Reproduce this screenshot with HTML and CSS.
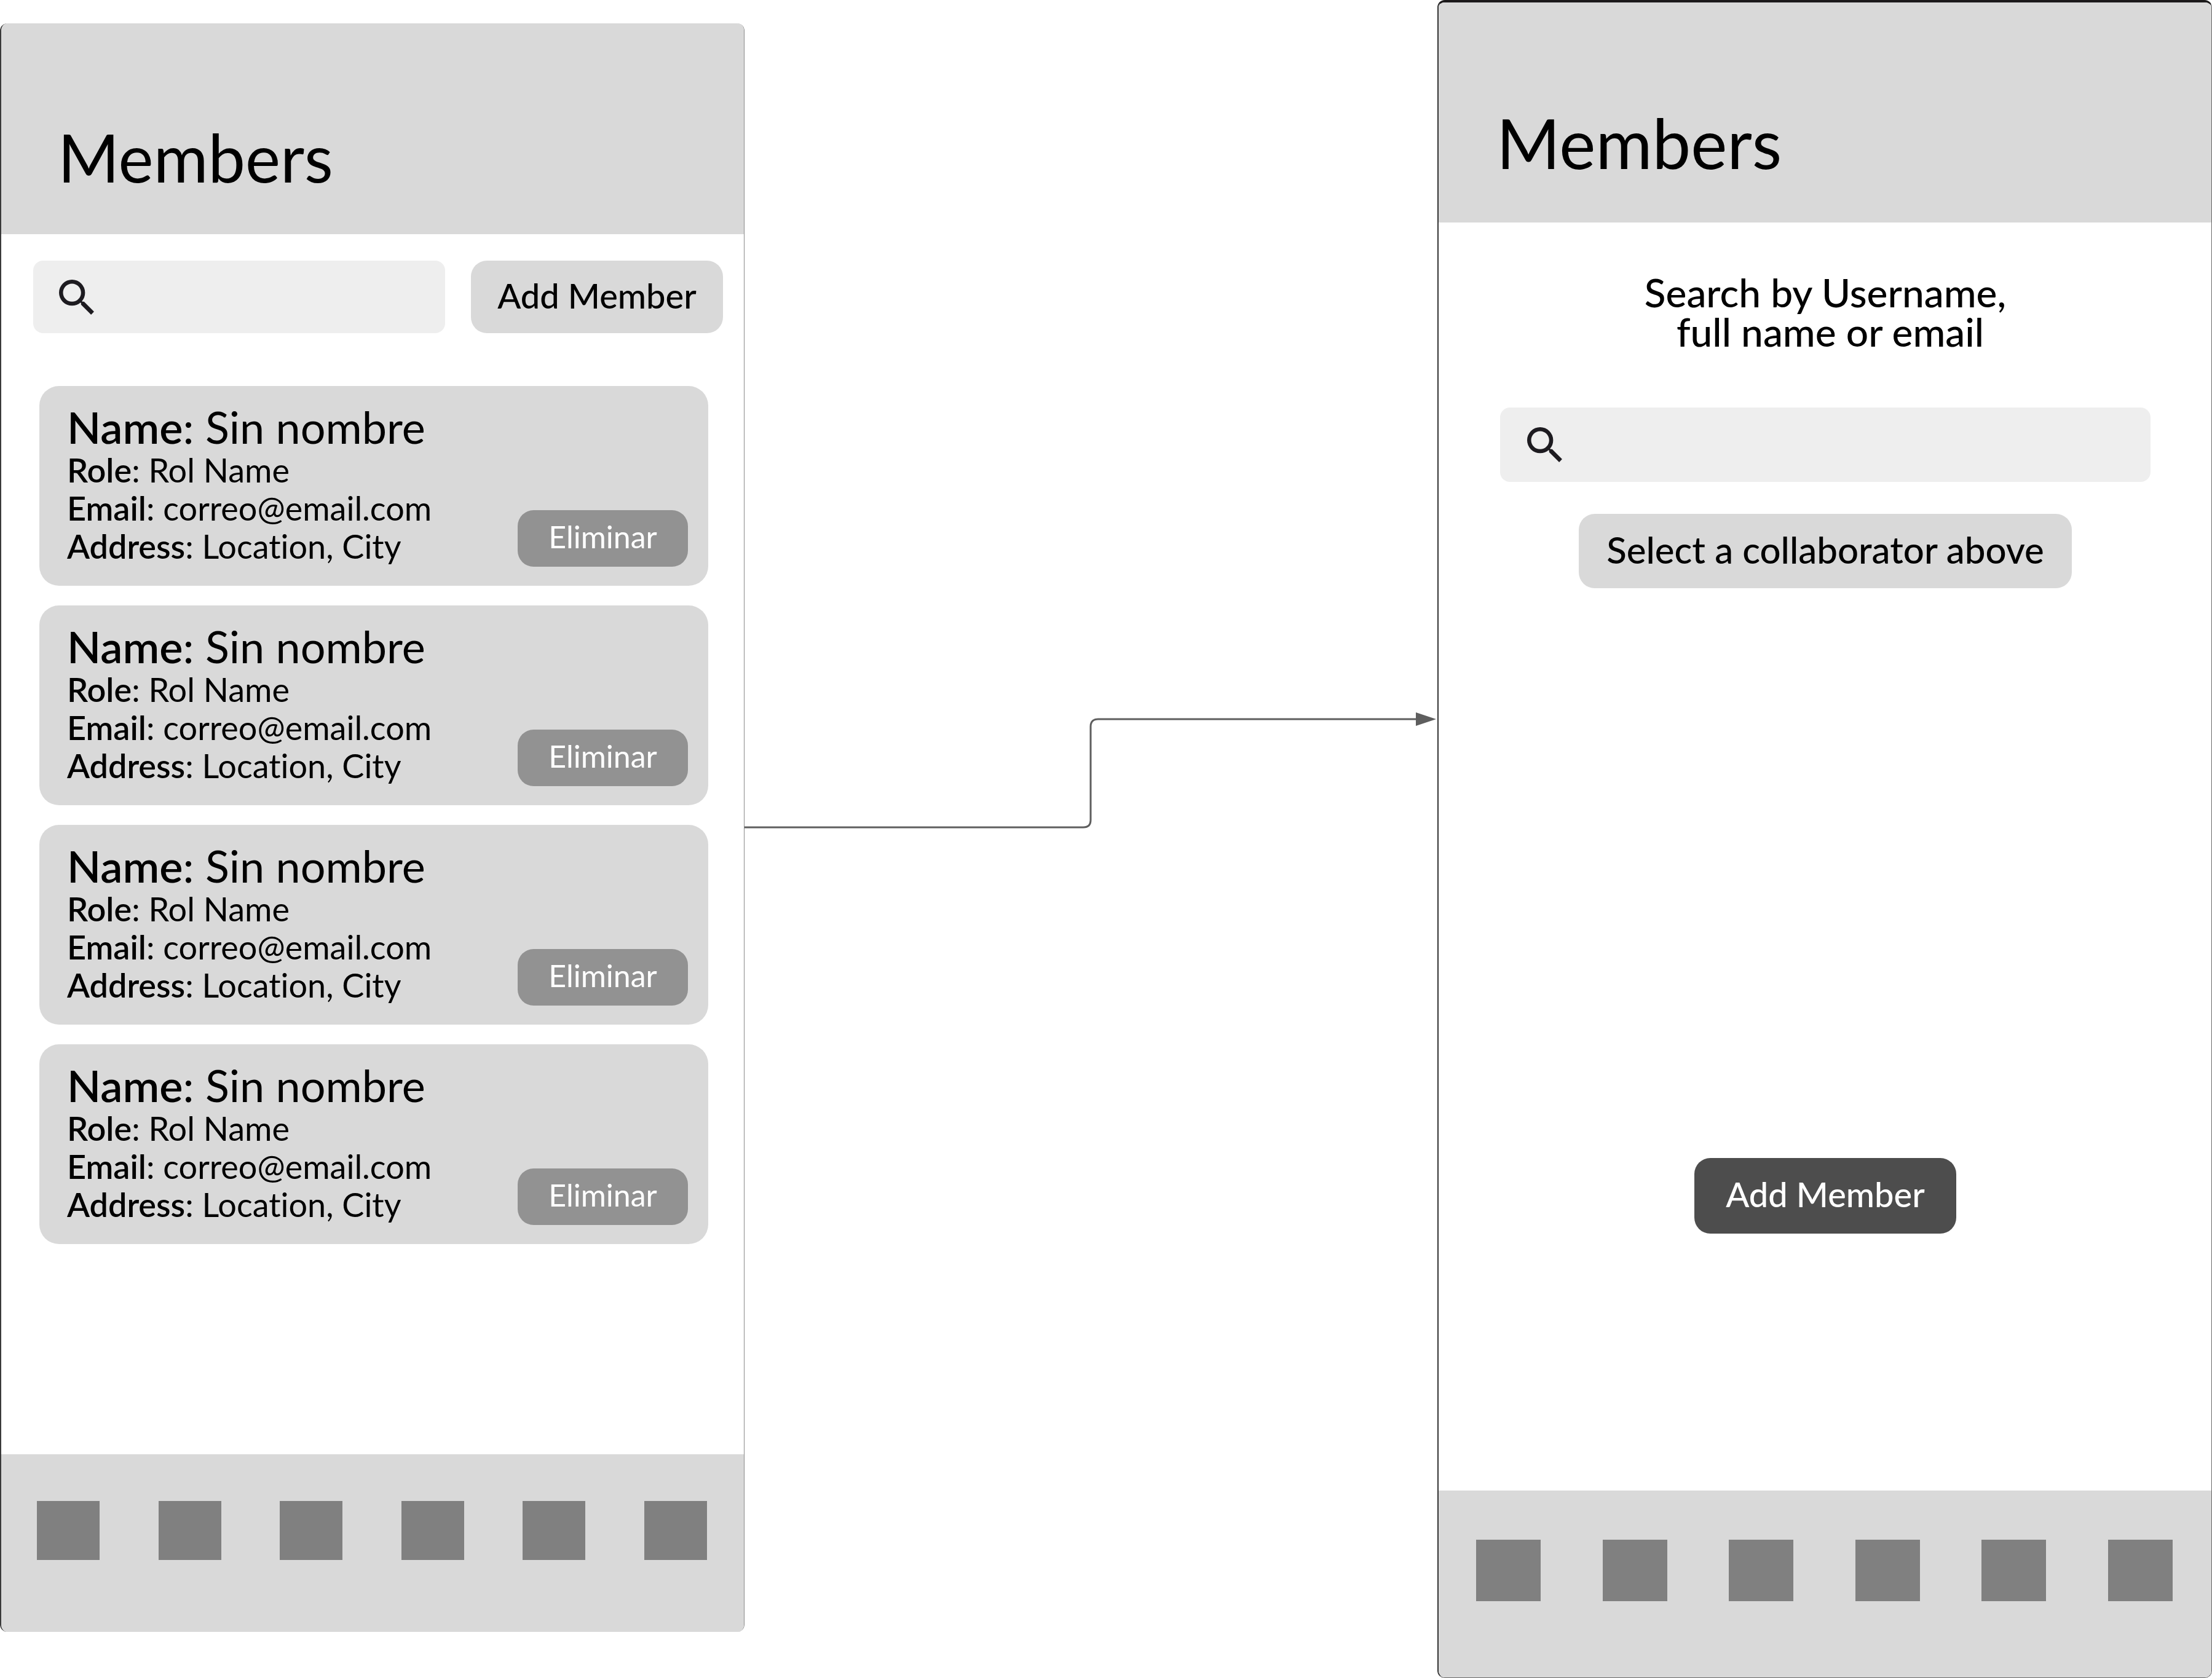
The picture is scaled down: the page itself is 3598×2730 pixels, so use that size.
FILE: index.html
```html
<!DOCTYPE html>
<html lang="en">
<head>
<meta charset="utf-8">
<meta name="viewport" content="width=device-width, initial-scale=1">
<title>Members flow</title>
<link rel="stylesheet" href="styles.css">
</head>
<body>
<div class="board">
  <section class="phone phone-list">
    <header class="phone-header"><h1 class="title">Members</h1></header>
    <main class="phone-body">
      <div class="toolbar">
        <label class="search">
          <svg class="search-icon" viewBox="3 3 17.5 17.5" aria-hidden="true"><path d="M15.5 14h-.79l-.28-.27A6.47 6.47 0 0 0 16 9.5 6.5 6.5 0 1 0 9.5 16c1.61 0 3.09-.59 4.23-1.57l.27.28v.79l5 4.99L20.49 19l-4.99-5zm-6 0C7.01 14 5 11.99 5 9.5S7.01 5 9.5 5 14 7.01 14 9.5 11.99 14 9.5 14z"/></svg>
          <input class="search-input" type="search" aria-label="Search members">
        </label>
        <button class="button button-light" type="button">Add Member</button>
      </div>
      <ul class="cards">
        <li class="card">
          <div class="details">
            <p class="name"><b>Name</b>: Sin nombre</p>
            <p class="line"><b>Role</b>: Rol Name</p>
            <p class="line"><b>Email</b>: correo@email.com</p>
            <p class="line"><b>Address</b>: Location, City</p>
          </div>
          <button class="button button-remove" type="button">Eliminar</button>
        </li>
        <li class="card">
          <div class="details">
            <p class="name"><b>Name</b>: Sin nombre</p>
            <p class="line"><b>Role</b>: Rol Name</p>
            <p class="line"><b>Email</b>: correo@email.com</p>
            <p class="line"><b>Address</b>: Location, City</p>
          </div>
          <button class="button button-remove" type="button">Eliminar</button>
        </li>
        <li class="card">
          <div class="details">
            <p class="name"><b>Name</b>: Sin nombre</p>
            <p class="line"><b>Role</b>: Rol Name</p>
            <p class="line"><b>Email</b>: correo@email.com</p>
            <p class="line"><b>Address</b>: Location, City</p>
          </div>
          <button class="button button-remove" type="button">Eliminar</button>
        </li>
        <li class="card">
          <div class="details">
            <p class="name"><b>Name</b>: Sin nombre</p>
            <p class="line"><b>Role</b>: Rol Name</p>
            <p class="line"><b>Email</b>: correo@email.com</p>
            <p class="line"><b>Address</b>: Location, City</p>
          </div>
          <button class="button button-remove" type="button">Eliminar</button>
        </li>
      </ul>
    </main>
    <nav class="tabs" aria-label="Sections">
      <span class="tab"></span><span class="tab"></span><span class="tab"></span><span class="tab"></span><span class="tab"></span><span class="tab"></span>
    </nav>
  </section>

  <svg class="connector" viewBox="0 0 1127 200" aria-hidden="true">
    <path d="M0 188H551Q563 188 563 176V24Q563 12 575 12H1095" fill="none" stroke="#5e5e5e" stroke-width="3"/>
    <path d="M1092 1L1125 12L1092 23Z" fill="#5e5e5e"/>
  </svg>

  <section class="phone phone-add">
    <header class="phone-header"><h1 class="title">Members</h1></header>
    <main class="phone-body">
      <p class="hint">Search by Username,<br>&nbsp;full name or email</p>
      <label class="search">
        <svg class="search-icon" viewBox="3 3 17.5 17.5" aria-hidden="true"><path d="M15.5 14h-.79l-.28-.27A6.47 6.47 0 0 0 16 9.5 6.5 6.5 0 1 0 9.5 16c1.61 0 3.09-.59 4.23-1.57l.27.28v.79l5 4.99L20.49 19l-4.99-5zm-6 0C7.01 14 5 11.99 5 9.5S7.01 5 9.5 5 14 7.01 14 9.5 11.99 14 9.5 14z"/></svg>
        <input class="search-input" type="search" aria-label="Search by username, full name or email">
      </label>
      <button class="button button-light button-select" type="button">Select a collaborator above</button>
      <button class="button button-dark" type="button">Add Member</button>
    </main>
    <nav class="tabs" aria-label="Sections">
      <span class="tab"></span><span class="tab"></span><span class="tab"></span><span class="tab"></span><span class="tab"></span><span class="tab"></span>
    </nav>
  </section>
</div>
</body>
</html>
```
FILE: styles.css
```css
* {
  box-sizing: border-box;
}

body {
  margin: 0;
  background: #fff;
  color: #000;
  font-family: Lato, "Open Sans", sans-serif;
  font-variant-ligatures: none;
}

h1, p, ul {
  margin: 0;
  padding: 0;
}

.board {
  display: grid;
  grid-template-columns: 1211fr 1127fr 1260fr;
  min-height: 100vh;
}

/* Phone frames */
.phone {
  display: flex;
  flex-direction: column;
  overflow: hidden;
  border-radius: 12px;
  background: #fff;
}

.phone-list {
  margin: 38px 0 75px;
  border-left: 2px solid #3a3a3a;
  border-right: 1px solid #8a8a8a;
}

.phone-add {
  border: 1px solid #6a6a6a;
  border-top: 4px solid #1c1a1b;
  border-left: 2px solid #333;
}

.phone-header {
  display: flex;
  align-items: flex-end;
  background: #d9d9d9;
}

.phone-list .phone-header {
  height: 343px;
  padding: 0 92px 66px;
}

.phone-add .phone-header {
  height: 358px;
  padding: 0 94px 70px;
}

.title {
  font-size: 108px;
  line-height: 120px;
  font-weight: 400;
}

.phone-add .title {
  font-size: 112px;
}

.phone-body {
  display: flex;
  flex: 1;
  flex-direction: column;
}

.phone-list .phone-body {
  padding: 43px 34px 43px 52px;
}

.phone-add .phone-body {
  align-items: center;
  padding: 82px 99px 0 100px;
}

/* Search field */
.search {
  display: flex;
  flex: 1;
  align-items: center;
  min-width: 0;
  height: 118px;
  padding: 0 42px;
  border-radius: 16px;
  background: #eee;
}

.phone-add .search {
  flex: none;
  width: 100%;
  height: 121px;
  margin: 91px 0 52px;
  padding: 0 44px;
}

.search-icon {
  flex: none;
  width: 57px;
  height: 57px;
  fill: #1d1b20;
}

.search-input {
  flex: 1;
  min-width: 0;
  height: 100%;
  border: 0;
  outline: 0;
  background: transparent;
  font: inherit;
  font-size: 54px;
}

.toolbar {
  display: flex;
  gap: 42px;
  margin-bottom: 86px;
}

/* Buttons */
.button {
  flex: none;
  padding: 0 0 6px;
  border: 0;
  border-radius: 26px;
  color: #000;
  font-family: inherit;
  font-size: 56px;
  font-weight: 500;
  font-variant-ligatures: inherit;
  white-space: nowrap;
}

.button-light {
  width: 410px;
  background: #d9d9d9;
}

.button-select {
  width: 802px;
  height: 121px;
  font-size: 60px;
}

.button-dark {
  width: 426px;
  height: 123px;
  margin: auto 0 418px;
  background: #4d4d4d;
  color: #fff;
}

.button-remove {
  width: 277px;
  height: 92px;
  background: #929292;
  color: #fff;
  font-size: 50px;
  font-weight: 400;
}

/* Member cards */
.cards {
  display: grid;
  gap: 32px;
  margin: 0 24px 0 10px;
  list-style: none;
}

.card {
  display: flex;
  align-items: flex-end;
  justify-content: space-between;
  padding: 26px 33px 31px 45px;
  border-radius: 32px;
  background: #d9d9d9;
}

.details {
  padding-bottom: 2px;
}

.details b {
  font-weight: 600;
}

.name {
  font-size: 72px;
  line-height: 80px;
}

.line {
  font-size: 54px;
  line-height: 62px;
}

.hint {
  font-size: 64px;
  font-weight: 500;
  line-height: 64px;
  text-align: center;
}

/* Arrow between the two screens */
.connector {
  display: block;
  width: 100%;
  margin-top: 1158px;
}

/* Bottom tab bar */
.tabs {
  display: flex;
  align-items: flex-start;
  justify-content: space-between;
  background: #d9d9d9;
}

.phone-list .tabs {
  height: 289px;
  padding: 76px 60px 0 58px;
}

.phone-add .tabs {
  height: 304px;
  padding: 80px 63px 0 61px;
}

.tab {
  width: 102px;
  height: 96px;
  background: #808080;
}

.phone-add .tab {
  width: 105px;
  height: 100px;
}
```
